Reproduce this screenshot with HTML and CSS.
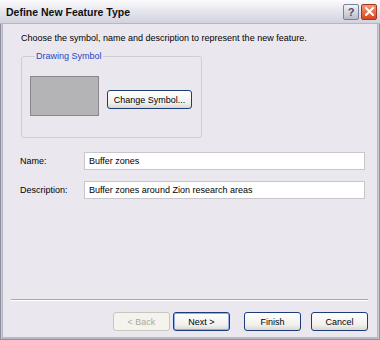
FILE: index.html
```html
<!DOCTYPE html>
<html lang="en">
<head>
    <meta charset="UTF-8">
    <title>Define New Feature Type</title>
    <link rel="stylesheet" href="styles.css">
</head>
<body>
    <div class="window">
        <div class="titlebar">
            <span class="title">Define New Feature Type</span>
            <div class="title-buttons">
                <span class="tbtn help">?</span>
                <span class="tbtn close">
                    <svg width="11" height="11" viewBox="0 0 11 11">
                        <path d="M2 2 L9 9 M9 2 L2 9" stroke="#fff" stroke-width="2" stroke-linecap="round"/>
                    </svg>
                </span>
            </div>
        </div>
        <div class="content">
            <p class="intro">Choose the symbol, name and description to represent the new feature.</p>
            <fieldset class="group">
                <legend>Drawing Symbol</legend>
                <div class="swatch"></div>
                <button class="btn">Change Symbol...</button>
            </fieldset>
            <div class="fields">
                <div class="row">
                    <label>Name:</label>
                    <div class="input">Buffer zones</div>
                </div>
                <div class="row">
                    <label>Description:</label>
                    <div class="input">Buffer zones around Zion research areas</div>
                </div>
            </div>
        </div>
        <div class="footer">
            <hr class="sep">
            <div class="actions">
                <button class="btn wide" disabled>&lt; Back</button>
                <button class="btn wide default">Next &gt;</button>
                <button class="btn wide finish">Finish</button>
                <button class="btn wide cancel">Cancel</button>
            </div>
        </div>
    </div>
</body>
</html>
```

FILE: styles.css
```css
body {
    margin: 0;
    padding: 0;
    font-family: "Liberation Sans", Arial, sans-serif;
    font-size: 9px;
    color: #000;
    background-color: #fff;
}
.window {
    width: 380px;
    height: 340px;
    box-sizing: border-box;
    background-color: #ebe7ee;
    border: 1px solid #8f8f9e;
    border-top: none;
    box-shadow: inset 1px 0 0 #c9c9d4, inset -1px 0 0 #c9c9d4, inset 2px 0 0 #b8b8c6, inset -2px 0 0 #b8b8c6, inset 0 -2px 0 #b8b8c6;
    display: flex;
    flex-direction: column;
}
.titlebar {
    height: 23px;
    margin: 0 -1px;
    padding: 0 3px 0 6px;
    display: flex;
    align-items: center;
    justify-content: space-between;
    background: linear-gradient(#fbfbfd, #e7e7ef 45%, #d3d3df);
    border-bottom: 1px solid #b6b6c4;
}
.title {
    font-weight: bold;
    font-size: 10.5px;
    color: #101010;
}
.title-buttons {
    display: flex;
    gap: 2px;
}
.tbtn {
    width: 14px;
    height: 14px;
    border-radius: 2px;
    display: flex;
    align-items: center;
    justify-content: center;
    font-weight: bold;
    font-size: 11px;
}
.help {
    background: linear-gradient(#f4f4f8, #b8bccb);
    border: 1px solid #7c8196;
    color: #4a5068;
}
.close {
    background: linear-gradient(#f29a7a, #d8461f);
    border: 1px solid #9c3a20;
}
.content {
    flex: 1;
    padding: 0 14px 0 19px;
}
.intro {
    margin: 9px 0 0 1px;
}
.group {
    width: 181px;
    box-sizing: border-box;
    margin: 8px 0 0 1px;
    padding: 15px 0 21px 8px;
    border: 1px solid #d0ccd4;
    border-radius: 3px;
    display: flex;
    align-items: flex-start;
    gap: 8px;
}
.group legend {
    color: #1f46c4;
    padding: 0 1px;
    margin-left: 5px;
}
.swatch {
    width: 67px;
    height: 38px;
    background-color: #b4b3b5;
    border: 1px solid #8a888c;
}
.btn {
    font-family: inherit;
    font-size: 9px;
    height: 19px;
    padding: 0 4px;
    border: 1px solid #1c3c7a;
    border-radius: 3px;
    background: linear-gradient(#ffffff, #f1f0ec 70%, #d9d7d1);
    color: #000;
    white-space: nowrap;
}
.group .btn {
    width: 85px;
    margin-top: 14px;
}
.fields {
    margin-top: 14px;
    display: flex;
    flex-direction: column;
    gap: 11px;
}
.row {
    display: flex;
    align-items: center;
}
.row label {
    width: 64px;
}
.input {
    flex: 1;
    height: 18px;
    box-sizing: border-box;
    background-color: #fff;
    border: 1px solid #c8c6cb;
    padding: 3px 0 0 4px;
}
.footer {
    padding: 0 11px 8px 10px;
}
.sep {
    margin: 0 0 11px 0;
    border: none;
    border-top: 1px solid #a9a7ad;
    border-bottom: 1px solid #fff;
}
.actions {
    display: flex;
    justify-content: flex-end;
    gap: 3px;
}
.wide {
    width: 57px;
}
.finish {
    margin-left: 11px;
}
.cancel {
    margin-left: 7px;
}
.default {
    box-shadow: inset 0 0 0 1px #8fb0ea;
}
.btn:disabled {
    color: #aca899;
    border-color: #c9c7ba;
    background: #f4f3ee;
}
```
